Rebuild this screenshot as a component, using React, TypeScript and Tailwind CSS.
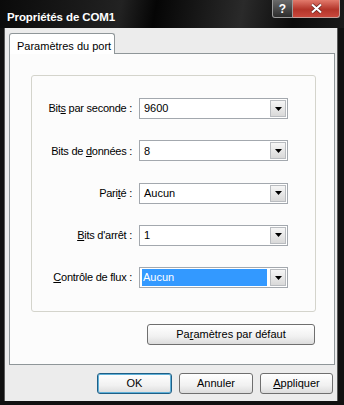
import React from "react";

const font = "font-['Liberation_Sans',Arial,sans-serif]";

function Arrow() {
  return (
    <svg width="7" height="4" viewBox="0 0 7 4">
      <path d="M0 0h7L3.5 4z" fill="#000" />
    </svg>
  );
}

// combo box, xp style
function Combo({ value, selected }: { value: string; selected?: boolean }) {
  return (
    <div className="w-[149px] h-[21px] flex items-stretch border border-[#a3a8ae] bg-white p-px">
      <div
        className={
          selected
            ? "flex-1 ml-px mr-[3px] flex items-center pl-px bg-[#3399ff] text-white"
            : "flex-1 flex items-center pl-[3px] text-black"
        }
      >
        {value}
      </div>
      <div className="w-[16px] flex items-center justify-center border border-[#b9bcc0] bg-[linear-gradient(to_bottom,#f6f6f6,#d9d9d9)]">
        <Arrow />
      </div>
    </div>
  );
}

function Row({ label, value, selected }: { label: React.ReactNode; value: string; selected?: boolean }) {
  return (
    <div className="flex items-center">
      <div className="w-[101px] text-right pr-px tracking-[-0.25px]">{label}</div>
      <div className="ml-[6px]">
        <Combo value={value} selected={selected} />
      </div>
    </div>
  );
}

function Btn({ children, w, focus }: { children: React.ReactNode; w: string; focus?: boolean }) {
  return (
    <button
      className={`${w} h-[21px] rounded-[3px] border ${
        focus ? "border-[#1f5f86] shadow-[inset_0_0_0_1px_#5fb0d8]" : "border-[#6f6f6f]"
      } bg-[linear-gradient(to_bottom,#ffffff,#f1f1f1_60%,#dcdcdc)] text-[11px] text-black flex items-center justify-center`}
    >
      {children}
    </button>
  );
}

export default function App() {
  return (
    <div className={`w-[344px] h-[405px] flex flex-col bg-[#111] overflow-hidden ${font} text-[11px]`}>
      {/* barre de titre */}
      <div className="h-[28px] flex items-start bg-[linear-gradient(100deg,#0a0a0a_0%,#222_35%,#050505_45%,#2a2a2a_70%,#0b0b0b_85%,#1a1a1a_100%)]">
        <div className="pl-[7px] pt-[9px] text-white font-bold text-[11.5px] tracking-[-0.1px]">Propriétés de COM1</div>
        <div className="ml-auto mr-[4px] flex">
          <div className="w-[21px] h-[18px] rounded-bl-[3px] border border-t-0 border-[#9a9a9a] bg-[linear-gradient(to_bottom,#6a6a6a,#2c2c2c)] text-white font-bold text-[12px] flex items-center justify-center">
            ?
          </div>
          <div className="w-[47px] h-[18px] rounded-br-[3px] border border-t-0 border-l-0 border-[#c9a09a] bg-[linear-gradient(to_bottom,#e27a6c,#b3352a_55%,#c9483c)] flex items-center justify-center">
            <svg width="13" height="11" viewBox="0 0 13 11">
              <path d="M2 1.5l9 8M11 1.5l-9 8" stroke="#5a1a14" strokeWidth="3.2" />
              <path d="M2 1.5l9 8M11 1.5l-9 8" stroke="#fff" strokeWidth="2.2" />
            </svg>
          </div>
        </div>
      </div>

      {/* corps */}
      <div className="flex-1 ml-[4px] mr-[6px] mb-[4px] bg-[#ececec] border-l border-r border-[#5a5a5a] flex flex-col">
        <div className="pt-[5px] ml-[4px]">
          <div className="relative z-10 w-[106px] h-[21px] -mb-px border border-b-0 border-[#8f9699] rounded-t-[3px] bg-white pl-[7px] pt-[4px] text-black">
            Paramètres du port
          </div>
          <div className="w-[326px] h-[312px] border border-[#8f9699] bg-[#fcfcfc] flex flex-col">
            <div className="ml-[21px] mt-[21px] w-[285px] h-[237px] border border-[#d4d4cc] rounded-[3px] pt-[22px] flex flex-col gap-[21.25px]">
              <Row label={<>Bit<span className="underline">s</span> par seconde :</>} value="9600" />
              <Row label={<>Bits de <span className="underline">d</span>onnées :</>} value="8" />
              <Row label={<>Pari<span className="underline">t</span>é :</>} value="Aucun" />
              <Row label={<><span className="underline">B</span>its d'arrêt :</>} value="1" />
              <Row label={<><span className="underline">C</span>ontrôle de flux :</>} value="Aucun" selected />
            </div>
            <div className="mt-[12px] self-end mr-[19px]">
              <Btn w="w-[168px]">
                Pa<span className="underline">r</span>amètres par défaut
              </Btn>
            </div>
          </div>
        </div>
        <div className="mt-[8px] flex justify-end gap-[7px] mr-[4px]">
          <Btn w="w-[75px]" focus>
            OK
          </Btn>
          <Btn w="w-[74px]">Annuler</Btn>
          <Btn w="w-[73px]">
            <span className="underline">A</span>ppliquer
          </Btn>
        </div>
      </div>
    </div>
  );
}
